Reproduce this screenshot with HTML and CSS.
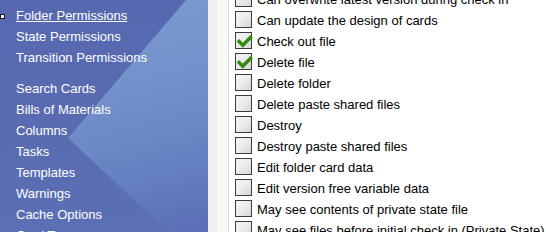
FILE: index.html
```html
<!DOCTYPE html>
<html lang="en">
<head>
    <meta charset="UTF-8">
    <title>Permissions</title>
    <link rel="stylesheet" href="styles.css">
</head>
<body>
    <div class="sidebar">
        <ul class="nav">
            <li><a href="#" class="active">Folder Permissions</a></li>
            <li><a href="#">State Permissions</a></li>
            <li><a href="#">Transition Permissions</a></li>
        </ul>
        <ul class="nav nav-group">
            <li><a href="#">Search Cards</a></li>
            <li><a href="#">Bills of Materials</a></li>
            <li><a href="#">Columns</a></li>
            <li><a href="#">Tasks</a></li>
            <li><a href="#">Templates</a></li>
            <li><a href="#">Warnings</a></li>
            <li><a href="#">Cache Options</a></li>
            <li><a href="#">Card Types</a></li>
        </ul>
    </div>
    <div class="gutter"></div>
    <div class="content">
        <ul class="perm-list">
            <li class="perm"><span class="box"></span>Can overwrite latest version during check in</li>
            <li class="perm"><span class="box"></span>Can update the design of cards</li>
            <li class="perm"><span class="box checked"><svg viewBox="0 0 20 17" width="20" height="17"><path d="M1.8 7.2 L6.8 12.2 L15.6 3.2" /></svg></span>Check out file</li>
            <li class="perm"><span class="box checked"><svg viewBox="0 0 20 17" width="20" height="17"><path d="M1.8 7.2 L6.8 12.2 L15.6 3.2" /></svg></span>Delete file</li>
            <li class="perm"><span class="box"></span>Delete folder</li>
            <li class="perm"><span class="box"></span>Delete paste shared files</li>
            <li class="perm"><span class="box"></span>Destroy</li>
            <li class="perm"><span class="box"></span>Destroy paste shared files</li>
            <li class="perm"><span class="box"></span>Edit folder card data</li>
            <li class="perm"><span class="box"></span>Edit version free variable data</li>
            <li class="perm"><span class="box"></span>May see contents of private state file</li>
            <li class="perm"><span class="box"></span>May see files before initial check in (Private State)</li>
        </ul>
    </div>
</body>
</html>
```

FILE: styles.css
```css
/* General */
html, body {
  margin: 0;
  padding: 0;
  height: 232px;
  overflow: hidden;
}

body {
  display: flex;
  font-family: 'Liberation Sans', Arial, sans-serif;
  font-size: 13px;
  background: #ffffff;
  color: #000000;
}

ul {
  list-style: none;
  margin: 0;
  padding: 0;
}

/* Sidebar */
.sidebar {
  position: relative;
  width: 208px;
  flex-shrink: 0;
  padding-top: 5px;
  box-sizing: border-box;
  background: linear-gradient(165deg, #7f9fd2 0%, #7390ca 45%, #6580c1 75%, #5a6db5 100%);
}

.sidebar::before {
  content: "";
  position: absolute;
  inset: 0;
  background: linear-gradient(180deg, #5668af 0%, #5b6fb5 100%);
  clip-path: polygon(0 0, 186px 0, 68px 138px, 168px 232px, 0 232px);
}

.nav {
  position: relative;
  padding-left: 16px;
}

.nav li {
  height: 21px;
  line-height: 21px;
}

.nav a {
  color: #ffffff;
  text-decoration: none;
  white-space: nowrap;
}

.nav a.active {
  text-decoration: underline;
}

.nav a.active::before {
  content: "";
  position: absolute;
  left: 0;
  top: 9px;
  width: 3px;
  height: 3px;
  background: #ffffff;
  border: 1px solid #1a1a1a;
}

.nav-group {
  margin-top: 10px;
}

/* Gutter between panes */
.gutter {
  width: 20px;
  flex-shrink: 0;
  background: linear-gradient(90deg, #f0f0f0 0, #f0f0f0 10px, #f8f8f8 10px, #f8f8f8 20px);
  border-right: 1px solid #d8d8d8;
}

/* Permission list */
.content {
  flex: 1;
  padding-left: 6px;
  overflow: hidden;
}

.perm-list {
  margin-top: -11px;
}

.perm {
  display: flex;
  align-items: flex-start;
  height: 21px;
  line-height: 21px;
  white-space: nowrap;
}

.box {
  position: relative;
  width: 15px;
  height: 15px;
  margin-top: 1px;
  margin-right: 5px;
  flex-shrink: 0;
  border: 1px solid #3c3c3c;
  background: linear-gradient(135deg, #f6f6f6 0%, #ebebeb 50%, #d6d6d6 100%);
}

.box svg {
  position: absolute;
  left: 0;
  top: 0;
  overflow: visible;
}

.box svg path {
  fill: none;
  stroke: #338c0c;
  stroke-width: 3.6;
  stroke-linecap: butt;
  stroke-linejoin: miter;
}
```
